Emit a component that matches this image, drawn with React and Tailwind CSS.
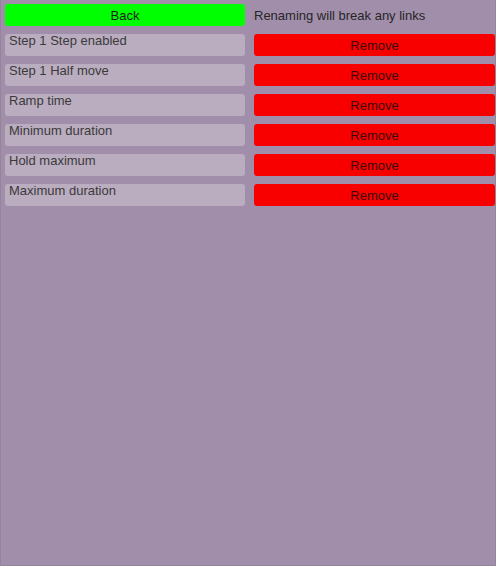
const fields = [
  'Step 1 Step enabled',
  'Step 1 Half move',
  'Ramp time',
  'Minimum duration',
  'Hold maximum',
  'Maximum duration',
];

export default function App() {
  return (
    <div
      className="h-[566px] w-[496px] bg-[#a18eaa] border-l border-r border-b border-[#958399] pt-[4px] pl-[4px] text-[13px]"
      style={{ fontFamily: '"Liberation Sans", Arial, sans-serif' }}
    >
      <div className="grid grid-cols-[240px_241px] gap-x-[9px] gap-y-[8px]">
        <button className="h-[22px] rounded-[3px] bg-[#00ff00] leading-[15px] text-[#1c1c1c]">
          Back
        </button>
        <div className="flex h-[22px] items-center leading-[15px] text-[#262626]">
          Renaming will break any links
        </div>

        {fields.map((name) => (
          <div key={name} className="contents">
            <div className="h-[22px] rounded-[3px] bg-[#baadc0] pl-[4px] leading-[13px] text-[#3a3a3a]">
              {name}
            </div>
            <button className="h-[22px] rounded-[3px] bg-[#f80000] leading-[15px] text-[#3a0a0a]">
              Remove
            </button>
          </div>
        ))}
      </div>
    </div>
  );
}
